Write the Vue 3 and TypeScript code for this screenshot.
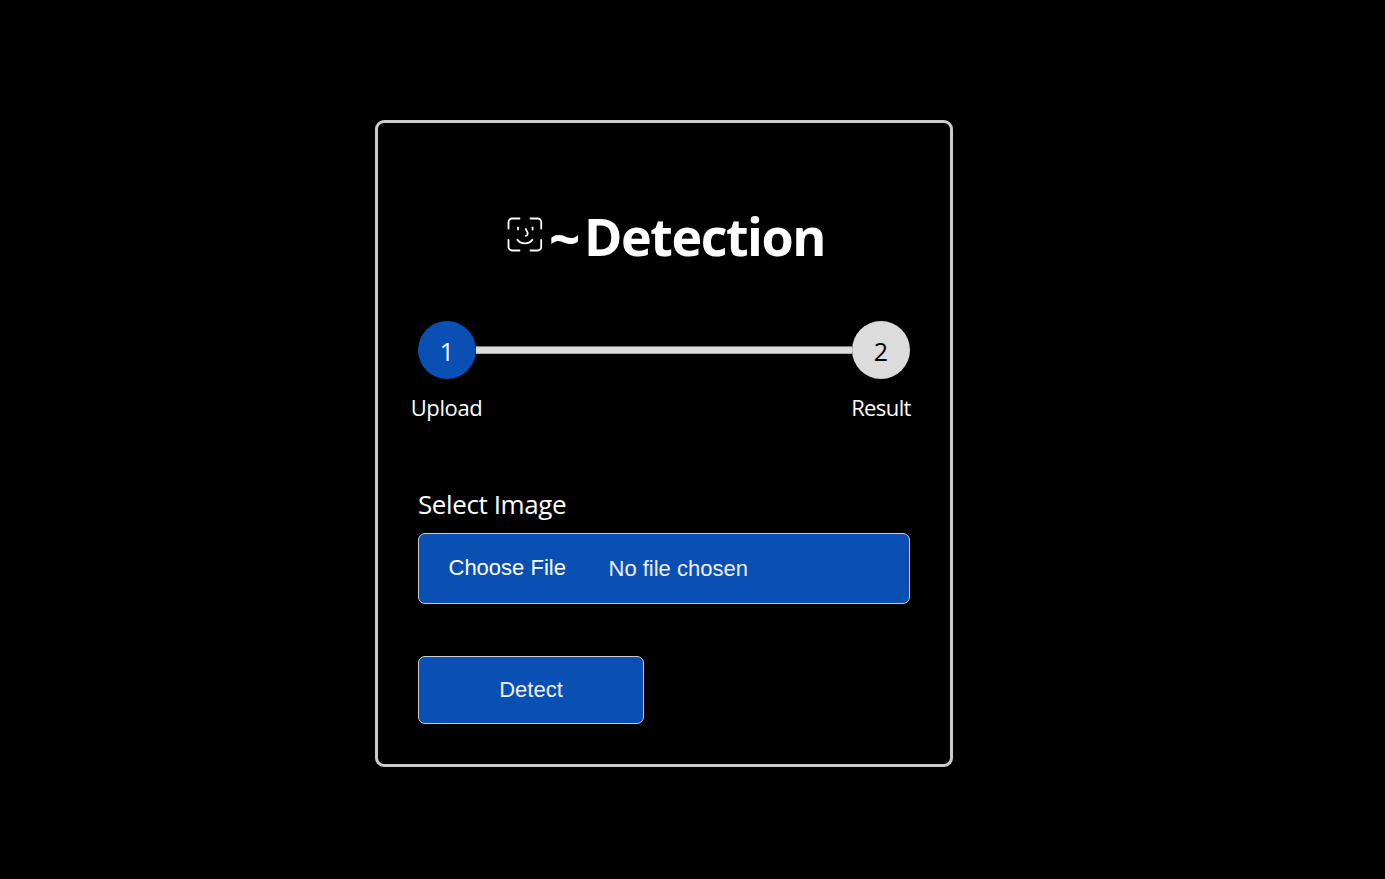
<script setup lang="ts">
interface Step {
  id: number
  label: string
  active: boolean
}

const steps: Step[] = [
  { id: 1, label: 'Upload', active: true },
  { id: 2, label: 'Result', active: false },
]
</script>

<template>
  <main class="page">
    <section class="card">
      <h1 class="title">
        <svg class="face" viewBox="0 0 36 36" fill="none" stroke="#fff" stroke-width="1.8" stroke-linecap="round" stroke-linejoin="round">
          <path d="M1.500 11.500V5a3.500 3.500 0 0 1 3.500-3.500H12.500M23.500 1.500h7.200a3.500 3.500 0 0 1 3.500 3.500v6.500M34.200 22.800v7.200a3.500 3.500 0 0 1-3.500 3.500H23.500M12.500 33.500H5a3.500 3.500 0 0 1-3.500-3.500v-7.200" />
          <path d="M11 10.500v2M25.600 10.500v2M18.900 12c.2 2 1.800 2.600 1.800 4.200s-.9 2.400-1.900 2.600M10.500 22.800c4 4.700 10.800 4.700 14.800 0" />
        </svg>
        <span class="tilde">~</span><span class="word">Detection</span>
      </h1>

      <div class="steps">
        <template v-for="(step, i) in steps" :key="step.id">
          <div v-if="i > 0" class="line"></div>
          <div class="step" :class="{ active: step.active }">
            <div class="circle"><span>{{ step.id }}</span></div>
            <span class="step-label" :class="step.label.toLowerCase()">{{ step.label }}</span>
          </div>
        </template>
      </div>

      <div class="field-label"><span>Select Image</span></div>
      <div class="file">
        <button class="choose" type="button">Choose File</button>
        <span class="file-name">No file chosen</span>
      </div>
      <button class="detect" type="button">Detect</button>
    </section>
  </main>
</template>

<style>
body {
  margin: 0;
  background: #000;
}
</style>

<style scoped>
.page {
  box-sizing: border-box;
  height: 879px;
  padding: 120px 0 0 375px;
  overflow: hidden;
  background: #000;
  color: #fff;
  font-family: 'Open Sans', 'Noto Sans', sans-serif;
}
.card {
  box-sizing: border-box;
  width: 578px;
  height: 647px;
  padding: 77px 40px 40px;
  border: 3px solid #ccc;
  border-radius: 9px;
  display: flex;
  flex-direction: column;
}
.title {
  display: flex;
  height: 72px;
  margin: 0;
  padding-left: 88px;
  font-size: 52px;
  font-weight: 700;
  line-height: 71px;
  white-space: nowrap;
}
.face {
  flex: none;
  width: 36px;
  height: 36px;
  margin: 16.500px 6.500px 0 0.500px;
}
.tilde {
  width: 35px;
  font-size: 55px;
  line-height: 75px;
}
.word {
  letter-spacing: -1.45px;
}
.steps {
  display: flex;
  height: 102px;
  margin-top: 49px;
}
.step {
  display: flex;
  flex: none;
  flex-direction: column;
  align-items: center;
  width: 58px;
}
.circle {
  width: 58px;
  height: 58px;
  border-radius: 50%;
  background: #dcdcdc;
  color: #000;
  font-size: 25px;
  line-height: 61px;
  text-align: center;
}
.active .circle {
  background: #0a4fb4;
  color: #fff;
}
.step-label {
  margin-top: 13px;
  font-size: 22px;
  line-height: 30px;
  white-space: nowrap;
}
.upload {
  margin-right: 1px;
  letter-spacing: -0.4px;
}
.result {
  letter-spacing: -0.6px;
}
.line {
  flex: 1;
  height: 6px;
  margin-top: 25px;
  border-top: 1px solid #777;
  border-bottom: 1px solid #aaa;
  background: #dcdcdc;
}
.field-label {
  height: 36px;
  margin-top: 62px;
  font-size: 26px;
  line-height: 38px;
  letter-spacing: -0.4px;
}
.file {
  box-sizing: border-box;
  display: flex;
  align-items: center;
  height: 71px;
  margin-top: 12px;
  padding-left: 29.500px;
  border: 1px solid #ccc;
  border-radius: 7px;
  background: #0a4fb4;
  font: 22px 'Liberation Sans', Arial, sans-serif;
}
.choose {
  width: 118px;
  margin: 0 42px 2px 0;
  padding: 0;
  border: 0;
  background: none;
  color: #fff;
  font: inherit;
  text-align: left;
  white-space: nowrap;
}
.file-name {
  color: #f0f0f0;
}
.detect {
  box-sizing: border-box;
  width: 226px;
  height: 68px;
  margin: 52px 0 0;
  padding: 0;
  border: 1px solid #ccc;
  border-radius: 7px;
  background: #0a4fb4;
  color: #f0f0f0;
  font: 22px 'Liberation Sans', Arial, sans-serif;
}
</style>
